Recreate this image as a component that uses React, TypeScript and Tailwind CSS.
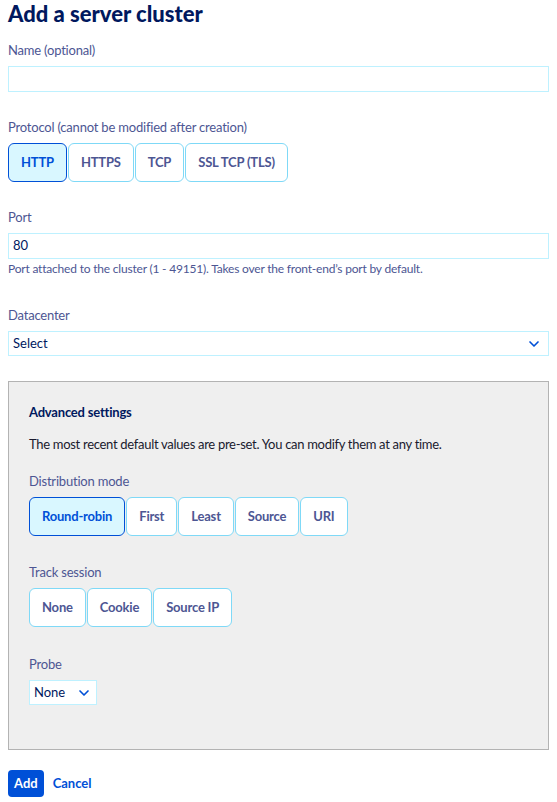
import { ChevronDown } from "lucide-react";

type Opt = { label: string; selected?: boolean };

function Tiles({ items }: { items: Opt[] }) {
  return (
    <div className="flex gap-px">
      {items.map((o) => (
        <button
          key={o.label}
          className={`h-[39px] px-[12px] rounded-[6px] border text-[13px] font-bold tracking-[-0.2px] ${
            o.selected
              ? "bg-[#d9f7ff] border-[#0050d7] text-[#0050d7]"
              : "bg-white border-[#7fd9f7] text-[#4d5693]"
          }`}
        >
          {o.label}
        </button>
      ))}
    </div>
  );
}

function Label({ children }: { children: React.ReactNode }) {
  return (
    <div className="text-[13px] leading-[16px] tracking-[-0.2px] text-[#4d5693] mb-2">{children}</div>
  );
}

export default function App() {
  return (
    <div
      className="w-[557px] min-h-[802px] bg-white px-2 text-[#00185e]"
      style={{ fontFamily: "Lato, 'Noto Sans', sans-serif" }}
    >
      <h1 className="pt-[1px] text-[22px] leading-[26px] font-black text-[#00185e]">Add a server cluster</h1>

      <div className="mt-[15px]">
        <Label>Name (optional)</Label>
        <input className="w-full h-[26px] border border-[#bef1ff] px-1 outline-none" />
      </div>

      <div className="mt-[27px]">
        <Label>Protocol (cannot be modified after creation)</Label>
        <Tiles
          items={[
            { label: "HTTP", selected: true },
            { label: "HTTPS" },
            { label: "TCP" },
            { label: "SSL TCP (TLS)" },
          ]}
        />
      </div>

      <div className="mt-[27px]">
        <Label>Port</Label>
        <div className="w-full h-[26px] border border-[#bef1ff] px-1 flex items-center text-[13px] text-[#00185e]">80</div>
        <div className="mt-[2px] text-[12px] leading-[16px] tracking-[-0.2px] text-[#4d5693]">
          Port attached to the cluster (1 - 49151). Takes over the front-end’s port by default.
        </div>
      </div>

      <div className="mt-[30px]">
        <Label>Datacenter</Label>
        <div className="w-full h-[25px] border border-[#bef1ff] pl-1 pr-[6px] flex items-center justify-between text-[13px] text-[#00185e]">
          <span>Select</span>
          <ChevronDown className="w-[16px] h-[16px] text-[#0050d7]" strokeWidth={2.5} />
        </div>
      </div>

      <div className="mt-[25px] h-[369px] bg-[#efefef] border border-[#b3b3b3] px-5 pt-[22px]">
        <div className="text-[13px] font-bold text-[#00185e] leading-[16px] tracking-[-0.2px]">Advanced settings</div>
        <div className="mt-[16px] text-[13px] leading-[16px] tracking-[-0.3px] text-[#1a1a2e]">
          The most recent default values are pre-set. You can modify them at any time.
        </div>

        <div className="mt-[21px]">
          <Label>Distribution mode</Label>
          <Tiles
            items={[
              { label: "Round-robin", selected: true },
              { label: "First" },
              { label: "Least" },
              { label: "Source" },
              { label: "URI" },
            ]}
          />
        </div>

        <div className="mt-[28px]">
          <Label>Track session</Label>
          <Tiles items={[{ label: "None" }, { label: "Cookie" }, { label: "Source IP" }]} />
        </div>

        <div className="mt-[29px]">
          <Label>Probe</Label>
          <div className="w-[68px] h-[25px] bg-white border border-[#bef1ff] pl-1 pr-[4px] flex items-center justify-between text-[13px] text-[#00185e]">
            <span>None</span>
            <ChevronDown className="w-[16px] h-[16px] text-[#0050d7]" strokeWidth={2.5} />
          </div>
        </div>
      </div>

      <div className="mt-[20px] flex items-center gap-[9px]">
        <button className="h-[27px] px-[6px] rounded-[4px] bg-[#0050d7] text-white text-[13px] font-bold">Add</button>
        <button className="text-[13px] font-bold text-[#0050d7]">Cancel</button>
      </div>
    </div>
  );
}
